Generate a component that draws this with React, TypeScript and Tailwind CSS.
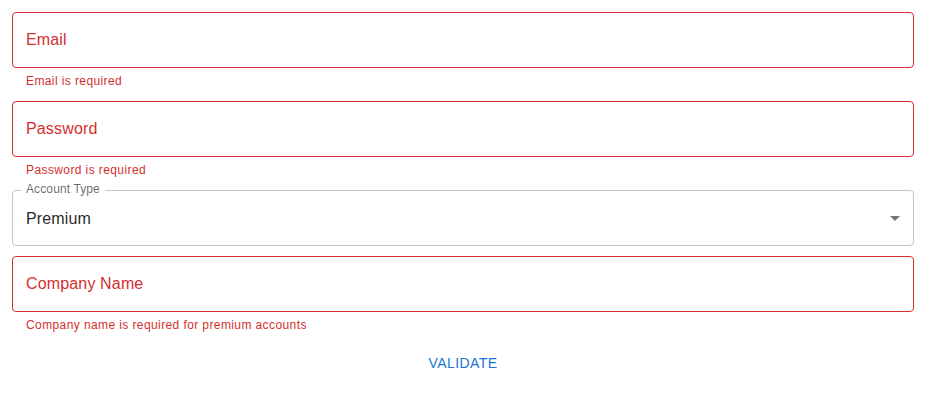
import React from "react";

const font = { fontFamily: "'Liberation Sans', Arial, sans-serif" };

function ErrorField({ label, helper }: { label: string; helper?: string }) {
  return (
    <div className="flex flex-col">
      <div className="relative h-[56px] rounded-[4px] border border-[#d32f2f] flex items-center px-[13px] pb-[1px]">
        <span className="text-[16px] leading-[23px] text-[#d32f2f] tracking-[0.00938em]">{label}</span>
      </div>
      {helper && (
        <p className="mt-[3px] mx-[14px] text-[12px] leading-[20px] text-[#d32f2f] tracking-[0.03333em]">{helper}</p>
      )}
    </div>
  );
}

export default function App() {
  return (
    <div className="w-[926px] h-[394px] bg-white px-[12px] pt-[12px] flex flex-col gap-[10px]" style={font}>
      <ErrorField label="Email" helper="Email is required" />
      <ErrorField label="Password" helper="Password is required" />
      <div className="relative h-[56px] rounded-[4px] border border-[#c4c4c4] flex items-center px-[13px]">
        <span className="absolute left-[8px] top-[-10px] bg-white px-[5px] text-[12px] leading-[17px] text-[rgba(0,0,0,0.6)] tracking-[0.00938em]">
          Account Type
        </span>
        <span className="text-[16px] leading-[23px] text-[rgba(0,0,0,0.87)] tracking-[0.00938em]">Premium</span>
        <svg
          className="absolute right-[6px] top-[15px] w-[24px] h-[24px]"
          viewBox="0 0 24 24"
          fill="rgba(0,0,0,0.54)"
        >
          <path d="M7 10l5 5 5-5z" />
        </svg>
      </div>
      <ErrorField label="Company Name" helper="Company name is required for premium accounts" />
      <div className="flex justify-center">
        <button className="px-[8px] py-[6px] min-w-[64px] h-[36px] text-[14px] leading-[24px] font-normal uppercase tracking-[0.02857em] text-[#1976d2] rounded-[4px]">
          Validate
        </button>
      </div>
    </div>
  );
}
